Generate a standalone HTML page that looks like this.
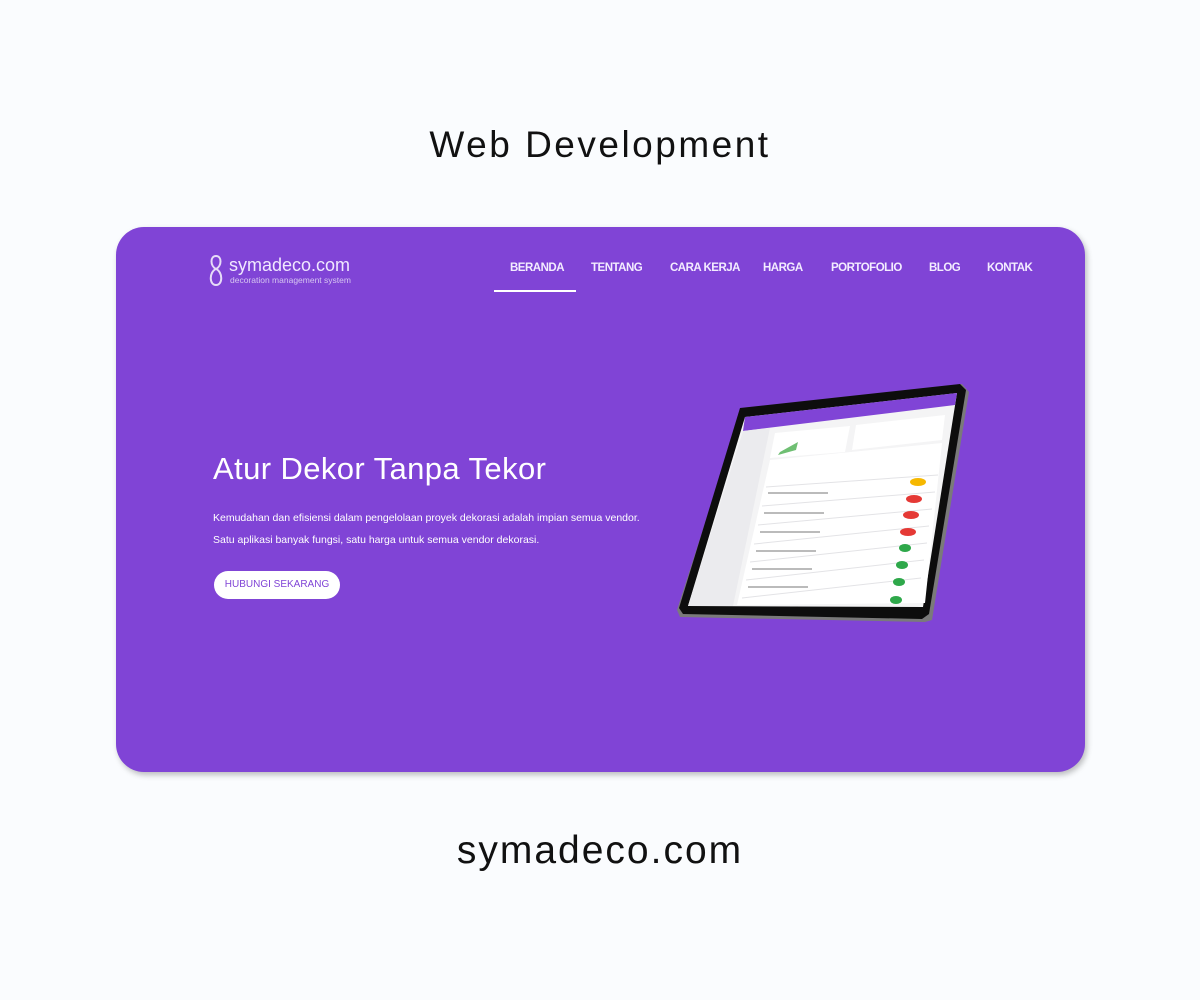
<!DOCTYPE html>
<html><head><meta charset="utf-8"><style>
*{margin:0;padding:0;box-sizing:border-box}
body{width:1200px;height:1000px;background:#fafcfe;position:relative;overflow:hidden;font-family:"Liberation Sans",sans-serif}
.t{position:absolute;left:0;width:1200px;text-align:center;color:#111}
.card{position:absolute;left:116px;top:227px;width:969px;height:545px;background:#8044d6;border-radius:28px;box-shadow:2px 3px 6px rgba(0,0,0,.25)}
.nav{position:absolute;top:262px;color:#f3ecff;font-weight:bold;font-size:11.5px;letter-spacing:-0.5px;white-space:nowrap}
.w{position:absolute;color:#fff;white-space:nowrap}
</style></head><body>
<div class="t" style="top:124px;font-size:37px;letter-spacing:2.5px">Web Development</div>
<div class="t" style="top:829px;font-size:39px;letter-spacing:2px">symadeco.com</div>
<div class="card"></div>
<svg style="position:absolute;left:205px;top:252px" width="22" height="36" viewBox="0 0 22 36"><path d="M11 17C5 14 5 4 11 4S17 14 11 17C4 20 4 33 11 33S18 20 11 17Z" fill="none" stroke="#e6dcf7" stroke-width="2"/></svg>
<div class="w" style="left:229px;top:255px;font-size:18px;color:#f0e8ff">symadeco.com</div>
<div class="w" style="left:230px;top:275px;font-size:8.5px;color:#d6c6f1">decoration management system</div>
<div class="nav" style="left:510px">BERANDA</div>
<div class="nav" style="left:591px">TENTANG</div>
<div class="nav" style="left:670px">CARA KERJA</div>
<div class="nav" style="left:763px">HARGA</div>
<div class="nav" style="left:831px">PORTOFOLIO</div>
<div class="nav" style="left:929px">BLOG</div>
<div class="nav" style="left:987px">KONTAK</div>
<div style="position:absolute;left:494px;top:290px;width:82px;height:2px;background:#fff"></div>
<div class="w" style="left:213px;top:451px;font-size:31px;letter-spacing:0.4px">Atur Dekor Tanpa Tekor</div>
<div class="w" style="left:213px;top:512px;font-size:10.5px">Kemudahan dan efisiensi dalam pengelolaan proyek dekorasi adalah impian semua vendor.</div>
<div class="w" style="left:213px;top:534px;font-size:10.5px">Satu aplikasi banyak fungsi, satu harga untuk semua vendor dekorasi.</div>
<div style="position:absolute;left:214px;top:571px;width:126px;height:28px;background:#fff;border-radius:14px;color:#8044d6;font-size:10px;text-align:center;line-height:28px">HUBUNGI SEKARANG</div>
<svg style="position:absolute;left:0;top:0" width="1200" height="1000">
<polygon points="742,408 962,384 969,392 932,620 925,622 680,617 677,610" fill="#7a7a7a"/>
<polygon points="740,408 960,384 966,390 929,614 922,619 683,614 679,608" fill="#0d0d0d"/>
<polygon points="745,417 957,393 923,607 688,606" fill="#f4f4f5"/>
<polygon points="745,417 957,393 955,405 743,431" fill="#8044d6"/>
<polygon points="743,431 770,428 733,606 688,606" fill="#ebebee"/>
<polygon points="775,433 850,426 845,452 770,458" fill="#fff"/>
<polygon points="856,425 945,415 942,440 852,450" fill="#fff"/>
<polygon points="780,452 798,442 796,450 778,455" fill="#6fbf73"/>
<polygon points="770,460 942,443 925,603 737,605" fill="#fff"/>
<g stroke="#e3e3e6" stroke-width="1">
<line x1="766" y1="487" x2="938" y2="475"/><line x1="762" y1="506" x2="935" y2="492"/><line x1="758" y1="525" x2="932" y2="509"/><line x1="754" y1="544" x2="929" y2="526"/><line x1="750" y1="562" x2="927" y2="543"/><line x1="746" y1="580" x2="924" y2="560"/><line x1="742" y1="598" x2="921" y2="578"/></g>
<g fill="#bbb"><rect x="768" y="492" width="60" height="2"/><rect x="764" y="512" width="60" height="2"/><rect x="760" y="531" width="60" height="2"/><rect x="756" y="550" width="60" height="2"/><rect x="752" y="568" width="60" height="2"/><rect x="748" y="586" width="60" height="2"/></g>
<ellipse cx="918" cy="482" rx="8" ry="4" fill="#f6b800"/>
<ellipse cx="914" cy="499" rx="8" ry="4" fill="#e53935"/>
<ellipse cx="911" cy="515" rx="8" ry="4" fill="#e53935"/>
<ellipse cx="908" cy="532" rx="8" ry="4" fill="#e53935"/>
<ellipse cx="905" cy="548" rx="6" ry="4" fill="#2ea84a"/>
<ellipse cx="902" cy="565" rx="6" ry="4" fill="#2ea84a"/>
<ellipse cx="899" cy="582" rx="6" ry="4" fill="#2ea84a"/>
<ellipse cx="896" cy="600" rx="6" ry="4" fill="#2ea84a"/>
</svg>
</body></html>
